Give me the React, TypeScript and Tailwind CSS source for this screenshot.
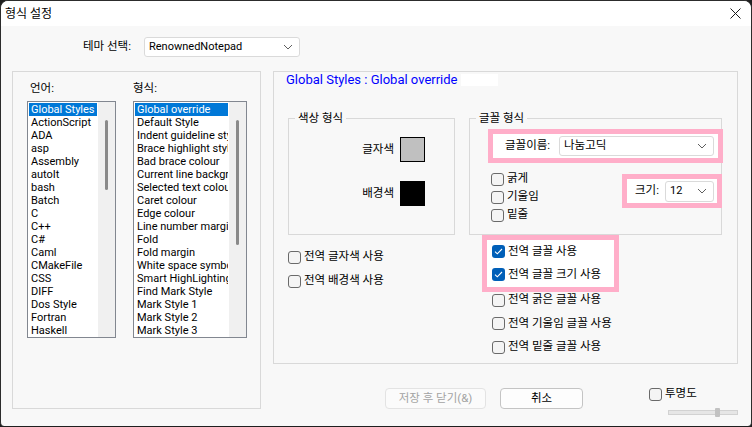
import React from "react";

const languages = [
  "Global Styles",
  "ActionScript",
  "ADA",
  "asp",
  "Assembly",
  "autoIt",
  "bash",
  "Batch",
  "C",
  "C++",
  "C#",
  "Caml",
  "CMakeFile",
  "CSS",
  "DIFF",
  "Dos Style",
  "Fortran",
  "Haskell",
];

const styles = [
  "Global override",
  "Default Style",
  "Indent guideline style",
  "Brace highlight style",
  "Bad brace colour",
  "Current line background colour",
  "Selected text colour",
  "Caret colour",
  "Edge colour",
  "Line number margin",
  "Fold",
  "Fold margin",
  "White space symbol",
  "Smart HighLighting",
  "Find Mark Style",
  "Mark Style 1",
  "Mark Style 2",
  "Mark Style 3",
];

function Chevron() {
  return (
    <svg width="10" height="6" viewBox="0 0 10 6" className="shrink-0">
      <path d="M1 1l4 4 4-4" fill="none" stroke="#5f5f5f" strokeWidth="1" />
    </svg>
  );
}

function Select({ value, className }: { value: string; className: string }) {
  return (
    <div
      className={
        "flex items-center justify-between rounded-[3px] border border-[#dadada] bg-white pl-[4px] pr-[6px] " +
        className
      }
    >
      <span>{value}</span>
      <Chevron />
    </div>
  );
}

function CheckBox({ label, checked = false }: { label: string; checked?: boolean }) {
  return (
    <div className="flex h-[16px] items-center gap-[3px]">
      {checked ? (
        <span className="flex size-[13px] items-center justify-center rounded-[3px] bg-[#005fb8]">
          <svg width="9" height="7" viewBox="0 0 9 7">
            <path d="M1 3.6l2.3 2.2L8 1" fill="none" stroke="white" strokeWidth="1.1" />
          </svg>
        </span>
      ) : (
        <span className="size-[13px] rounded-[3px] border border-[#6a6a6a] bg-[#f4f4f4]" />
      )}
      <span className="whitespace-nowrap">{label}</span>
    </div>
  );
}

function ListBox({
  items,
  width,
  thumb,
}: {
  items: string[];
  width: string;
  thumb: string;
}) {
  return (
    <div className={"flex h-[237px] border border-[#828790] bg-white text-[11px] " + width}>
      <div className="min-w-0 flex-1 p-[1px] pr-0">
        {items.map((item, i) => (
          <div
            key={item}
            className={
              i === 0
                ? "h-[13px] overflow-hidden whitespace-nowrap bg-[#0078d7] pl-[2px] leading-[13px] text-white"
                : "h-[13px] overflow-hidden whitespace-nowrap pl-[2px] leading-[13px]"
            }
          >
            {item}
          </div>
        ))}
      </div>
      <div className="ml-[1px] flex w-[17px] flex-col items-center bg-[#f0f0f0] pt-[18px]">
        <div className={"w-[3px] rounded-full bg-[#8a8a8a] " + thumb} />
      </div>
    </div>
  );
}

function GroupBox({
  legend,
  className,
  children,
}: {
  legend: string;
  className: string;
  children: React.ReactNode;
}) {
  return (
    <div className={"relative border border-[#d9d9d9] " + className}>
      <span className="absolute left-[6px] top-[-9px] bg-[#f8f8f8] px-[3px] leading-[16px]">
        {legend}
      </span>
      {children}
    </div>
  );
}

export default function App() {
  return (
    <div className="h-[427px] w-[752px] bg-[#1f1f1f]">
      <div className="flex h-[426px] w-[752px] flex-col overflow-hidden rounded-b-[4px] rounded-t-[8px] border-x border-t border-[#2c2c2c] bg-[#f8f8f8] font-['Roboto','Noto_Sans_CJK_KR',sans-serif] text-[11.5px] text-black">
        {/* Title bar */}
        <div className="flex h-[25px] items-center justify-between bg-white pl-[4px] pr-[10px]">
          <span className="text-[12px]">형식 설정</span>
          <svg width="11" height="11" viewBox="0 0 11 11">
            <path d="M0.5 0.5l10 10M10.5 0.5l-10 10" stroke="#1a1a1a" strokeWidth="1" />
          </svg>
        </div>

        {/* Theme row */}
        <div className="mt-[11px] flex h-[20px] items-center">
          <span className="w-[130px] text-right">테마 선택:</span>
          <Select value="RenownedNotepad" className="ml-[13px] h-[20px] w-[156px] text-[11px]" />
        </div>

        {/* Main */}
        <div className="mt-[14px] flex items-start pl-[11px]">
          {/* Left group */}
          <div className="flex h-[338px] w-[249px] gap-[17px] border border-[#d9d9d9] pl-[14px] pt-[8px]">
            <div className="flex flex-col">
              <span className="h-[16px] pl-[3px] leading-[16px]">언어:</span>
              <div className="mt-[5px]">
                <ListBox items={languages} width="w-[89px]" thumb="h-[70px]" />
              </div>
            </div>
            <div className="flex flex-col">
              <span className="h-[16px] leading-[16px]">형식:</span>
              <div className="mt-[5px]">
                <ListBox items={styles} width="w-[114px]" thumb="h-[125px]" />
              </div>
            </div>
          </div>

          {/* Right column */}
          <div className="ml-[12px] flex w-[465px] flex-col">
            <div className="h-[293px] border border-[#d9d9d9] pl-[12px] pr-[15px]">
              <div className="flex h-[16px] items-center">
                <span className="text-[13px] leading-[16px] text-[#0000ff]">
                  Global Styles : Global override
                </span>
                <span className="ml-[4px] h-[12px] w-[37px] bg-white" />
              </div>

              <div className="ml-[2px] mt-[30px] flex gap-[14px]">
                {/* Colour column */}
                <div className="flex w-[167px] flex-col">
                  <GroupBox legend="색상 형식" className="h-[117px]">
                    <div className="flex flex-col gap-[19px] pt-[18px]">
                      <div className="flex items-center">
                        <span className="w-[105px] text-right">글자색</span>
                        <span className="ml-[6px] size-[25px] border border-black bg-[#c0c0c0]" />
                      </div>
                      <div className="flex items-center">
                        <span className="w-[105px] text-right">배경색</span>
                        <span className="ml-[6px] size-[25px] border border-black bg-black" />
                      </div>
                    </div>
                  </GroupBox>
                  <div className="mt-[14px] flex flex-col gap-[8px]">
                    <CheckBox label="전역 글자색 사용" />
                    <CheckBox label="전역 배경색 사용" />
                  </div>
                </div>

                {/* Font column */}
                <div className="flex w-[253px] flex-col">
                  <GroupBox legend="글꼴 형식" className="h-[117px]">
                    <div className="ml-[18px] mt-[10px] flex h-[34px] w-[235px] items-center border-[5px] border-[#ffaec9] bg-white pl-[12px] pr-[4px]">
                      <span className="w-[54px] whitespace-nowrap">글꼴이름:</span>
                      <Select value="나눔고딕" className="h-[20px] flex-1" />
                    </div>
                    <div className="flex">
                      <div className="ml-[21px] mt-[7px] flex flex-col">
                        <div className="flex h-[18px] items-center">
                          <CheckBox label="굵게" />
                        </div>
                        <div className="flex h-[18px] items-center">
                          <CheckBox label="기울임" />
                        </div>
                        <div className="flex h-[18px] items-center">
                          <CheckBox label="밑줄" />
                        </div>
                      </div>
                      <div className="-mr-[1px] ml-auto mt-[11px] flex h-[34px] w-[100px] items-center border-[5px] border-[#ffaec9] bg-white pl-[8px] pr-[3px]">
                        <span className="w-[30px] whitespace-nowrap">크기:</span>
                        <Select value="12" className="h-[21px] flex-1 text-[11px]" />
                      </div>
                    </div>
                  </GroupBox>
                  <div className="ml-[13px] flex h-[57px] w-[137px] flex-col border-[5px] border-[#ffaec9] bg-white pl-[5px]">
                    <div className="flex h-[23px] items-center">
                      <CheckBox label="전역 글꼴 사용" checked />
                    </div>
                    <div className="flex h-[23px] items-center">
                      <CheckBox label="전역 글꼴 크기 사용" checked />
                    </div>
                  </div>
                  <div className="ml-[23px] flex flex-col gap-[7.5px]">
                    <CheckBox label="전역 굵은 글꼴 사용" />
                    <CheckBox label="전역 기울임 글꼴 사용" />
                    <CheckBox label="전역 밑줄 글꼴 사용" />
                  </div>
                </div>
              </div>
            </div>

            {/* Bottom row */}
            <div className="flex items-start">
              <button className="ml-[112px] mt-[24px] h-[21px] w-[101px] rounded-[4px] border border-[#e3e3e3] bg-[#fbfbfb] text-[#a3a3a3]">
                저장 후 닫기(&amp;)
              </button>
              <button className="ml-[14px] mt-[24px] h-[21px] w-[83px] rounded-[4px] border border-[#c4c4c4] bg-[#fdfdfd]">
                취소
              </button>
              <div className="ml-auto mt-[22px] flex w-[90px] flex-col">
                <div className="pl-[1px]">
                  <CheckBox label="투명도" />
                </div>
                <div className="ml-auto mt-[6px] flex h-[9px] w-[70px] items-center">
                  <div className="h-[5px] flex-1 border border-r-0 border-[#d2d2d2] bg-[#e6e6e6]" />
                  <div className="h-[9px] w-[5px] rounded-[1px] bg-[#c2c2c2]" />
                  <div className="h-[5px] w-[18px] border border-l-0 border-[#d2d2d2] bg-[#e6e6e6]" />
                </div>
              </div>
            </div>
          </div>
        </div>
      </div>
    </div>
  );
}
